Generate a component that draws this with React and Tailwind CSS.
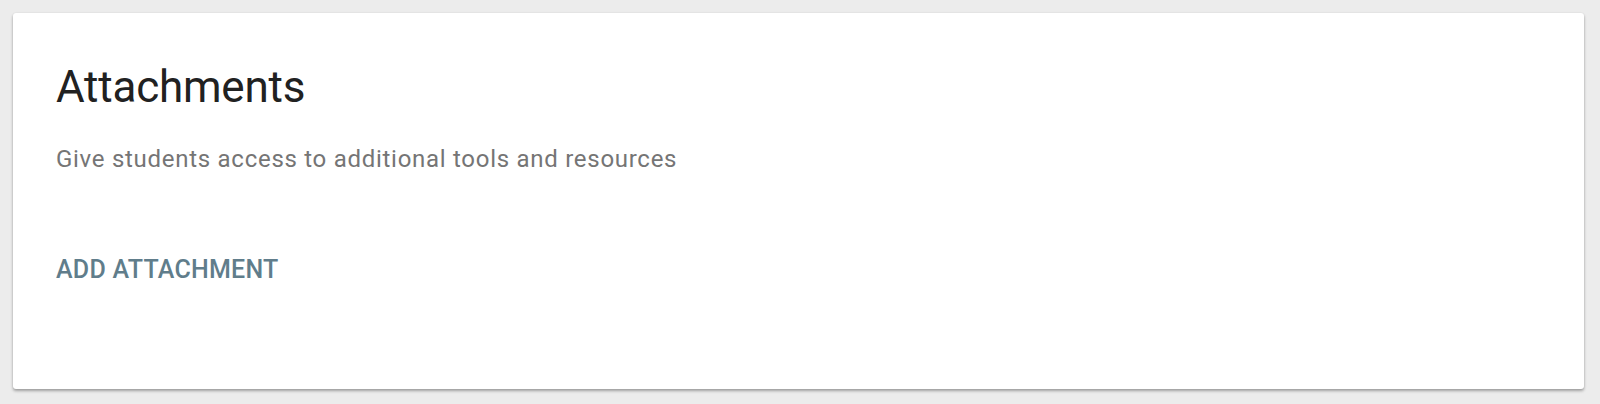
export default function App() {
  return (
    <div className="min-h-[404px] bg-[#ececec] p-[13px] pr-[16px] font-['Roboto',sans-serif]">
      <div className="rounded-[3px] bg-white pl-[43px] pt-[48px] pb-[103px] shadow-[0_2px_3px_rgba(0,0,0,0.32),0_0_2px_rgba(0,0,0,0.08)]">
        <h2 className="text-[44px] leading-[52px] font-normal text-[#212121] tracking-[-0.005em]">Attachments</h2>
        <p className="mt-[30px] text-[24px] leading-[32px] text-[#757575] tracking-[0.03em]">
          Give students access to additional tools and resources
        </p>
        <button className="mt-[79px] block text-[25px] leading-[32px] font-medium uppercase text-[#607d8b] tracking-[0.01em]">
          Add attachment
        </button>
      </div>
    </div>
  );
}
